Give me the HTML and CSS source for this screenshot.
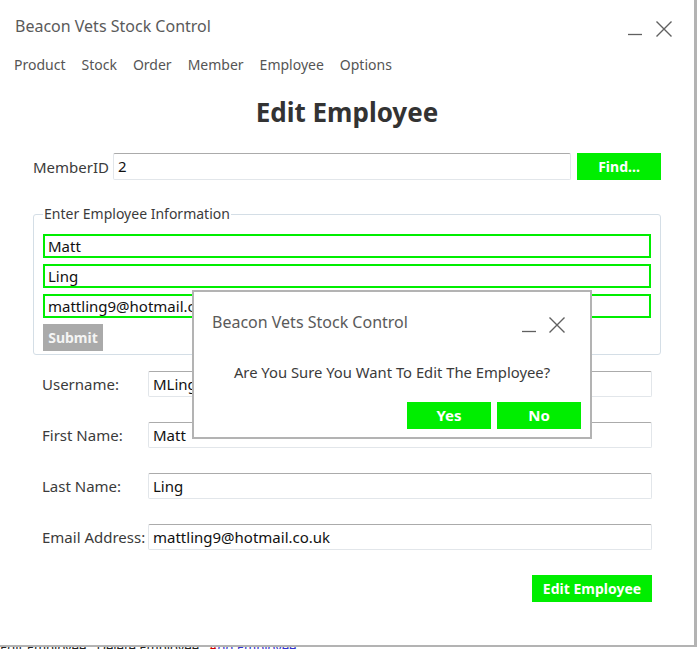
FILE: index.html
```html
<!DOCTYPE html>
<html>
<head>
<meta charset="utf-8">
<link rel="stylesheet" href="styles.css">
</head>
<body>
<div class="window">
  <div class="titlebar">
    <span class="title">Beacon Vets Stock Control</span>
    <div class="controls">
      <svg class="ctl" width="20" height="20" viewBox="0 0 20 20"><line x1="3" y1="15.5" x2="17" y2="15.5" stroke="#606060" stroke-width="1.3"/></svg>
      <svg class="ctl" width="20" height="20" viewBox="0 0 20 20"><path d="M2.5 2.5 L17.5 17.5 M17.5 2.5 L2.5 17.5" stroke="#606060" stroke-width="1.4" fill="none"/></svg>
    </div>
  </div>
  <nav class="menu">
    <span>Product</span><span>Stock</span><span>Order</span><span>Member</span><span>Employee</span><span>Options</span>
  </nav>
  <h1 class="heading">Edit Employee</h1>
  <div class="content">
    <div class="find-row">
      <label class="find-label">MemberID</label>
      <div class="tb find-input">2</div>
      <div class="btn find-btn">Find...</div>
    </div>
    <fieldset class="info">
      <legend>Enter Employee Information</legend>
      <div class="gtb">Matt</div>
      <div class="gtb">Ling</div>
      <div class="gtb">mattling9@hotmail.co.uk</div>
      <div class="btn submit">Submit</div>
    </fieldset>
    <div class="fields">
      <div class="frow"><span class="flabel">Username:</span><div class="tb fin">MLing</div></div>
      <div class="frow"><span class="flabel">First Name:</span><div class="tb fin">Matt</div></div>
      <div class="frow"><span class="flabel">Last Name:</span><div class="tb fin">Ling</div></div>
      <div class="frow"><span class="flabel">Email Address:</span><div class="tb fin">mattling9@hotmail.co.uk</div></div>
    </div>
    <div class="actions"><div class="btn edit-btn">Edit Employee</div></div>
  </div>

  <div class="dialog">
    <div class="dtitlebar">
      <span class="dtitle">Beacon Vets Stock Control</span>
      <div class="dcontrols">
        <svg width="18" height="18" viewBox="0 0 18 18"><line x1="2" y1="15.5" x2="16" y2="15.5" stroke="#606060" stroke-width="1.3"/></svg>
        <svg width="18" height="18" viewBox="0 0 18 18"><path d="M1.5 1.5 L16.5 16.5 M16.5 1.5 L1.5 16.5" stroke="#606060" stroke-width="1.4" fill="none"/></svg>
      </div>
    </div>
    <div class="dmsg">Are You Sure You Want To Edit The Employee?</div>
    <div class="dbtns">
      <div class="btn dbtn">Yes</div>
      <div class="btn dbtn">No</div>
    </div>
  </div>
</div>
<div class="taskbar">
  <span class="tb1">Edit Employee&nbsp;&nbsp; Delete Employee&nbsp;&nbsp; <span class="red">A</span><span class="blue">dd Employee</span></span>
</div>
</body>
</html>
```

FILE: styles.css
```css
* { box-sizing: border-box; }
html, body { margin: 0; padding: 0; background: #ffffff; }
body {
  width: 697px;
  height: 649px;
  overflow: hidden;
  font-family: "Noto Sans", "Open Sans", sans-serif;
  color: #3b3b3b;
}
.window {
  position: relative;
  width: 697px;
  height: 647px;
  background: #ffffff;
  border-right: 3px solid #b3b3b3;
  border-bottom: 2px solid #b3b3b3;
}
.titlebar {
  height: 52px;
  display: flex;
  align-items: flex-start;
  justify-content: space-between;
  padding: 15px 20px 0 15px;
}
.title {
  font-size: 16px;
  color: #5a5a5a;
  line-height: 22px;
}
.controls {
  display: flex;
  gap: 9px;
  padding-top: 4px;
}
.menu {
  display: flex;
  gap: 16px;
  padding-left: 14px;
  height: 26px;
  font-size: 14px;
  line-height: 26px;
  color: #555555;
}
.heading {
  margin: 17px 0 0;
  text-align: center;
  font-size: 26px;
  font-weight: bold;
  color: #333333;
  line-height: 34px;
}
.content {
  padding: 24px 33px 0 33px;
}
.tb {
  height: 27px;
  background: #fff;
  border: 1px solid #e2e6ea;
  border-top-color: #ababab;
  border-radius: 2px;
  font-size: 15px;
  color: #111;
  padding-left: 4px;
  line-height: 24px;
}
.btn {
  background: #00ee00;
  color: #ffffff;
  font-weight: bold;
  font-size: 14px;
  text-align: center;
  line-height: 27px;
  height: 27px;
}
.find-row {
  display: flex;
  align-items: center;
  gap: 6px;
}
.find-label {
  width: 74px;
  font-size: 15px;
  color: #3b3b3b;
}
.find-input { flex: 1; }
.find-btn { width: 84px; }
.info {
  margin: 26px 0 0;
  padding: 12px 9px 3px 9px;
  border: 1px solid #d4dee6;
  border-radius: 3px;
  min-width: 0;
  display: flex;
  flex-direction: column;
  gap: 6px;
}
.info legend {
  padding: 0 1px;
  margin-left: 0;
  font-size: 14px;
  color: #3b3b3b;
  line-height: 16px;
}
.gtb {
  height: 24px;
  border: 2px solid #00ee00;
  font-size: 15px;
  color: #111;
  padding-left: 3px;
  line-height: 20px;
}
.submit {
  width: 60px;
  background: #aaaaaa;
  color: #f4f4f4;
}
.fields {
  margin-top: 16px;
  display: flex;
  flex-direction: column;
  gap: 25px;
  padding-left: 9px;
  padding-right: 9px;
}
.frow {
  display: flex;
  align-items: center;
}
.flabel {
  width: 106px;
  font-size: 15px;
  color: #3b3b3b;
}
.fin { flex: 1; height: 26px; }
.actions {
  display: flex;
  justify-content: flex-end;
  padding-right: 9px;
  margin-top: 25px;
}
.edit-btn { width: 120px; }

.dialog {
  position: absolute;
  left: 192px;
  top: 290px;
  width: 400px;
  height: 149px;
  background: #ffffff;
  border: 2px solid #b3b3b3;
  display: flex;
  flex-direction: column;
}
.dtitlebar {
  display: flex;
  justify-content: space-between;
  align-items: flex-start;
  padding: 19px 24px 0 18px;
  height: 70px;
}
.dtitle {
  font-size: 16px;
  color: #5a5a5a;
  line-height: 22px;
}
.dcontrols {
  display: flex;
  gap: 10px;
  padding-top: 5px;
}
.dmsg {
  text-align: center;
  font-size: 14.8px;
  color: #3b3b3b;
  line-height: 20px;
}
.dbtns {
  display: flex;
  justify-content: flex-end;
  gap: 6px;
  padding-right: 9px;
  margin-top: 20px;
}
.dbtn { width: 84px; font-size: 15px; }

.taskbar {
  height: 2px;
  overflow: hidden;
  position: relative;
}
.tb1 {
  position: absolute;
  top: -9px;
  left: 0;
  font-size: 13px;
  white-space: nowrap;
  color: #222;
}
.red { color: #c00; }
.blue { color: #33c; }
```
